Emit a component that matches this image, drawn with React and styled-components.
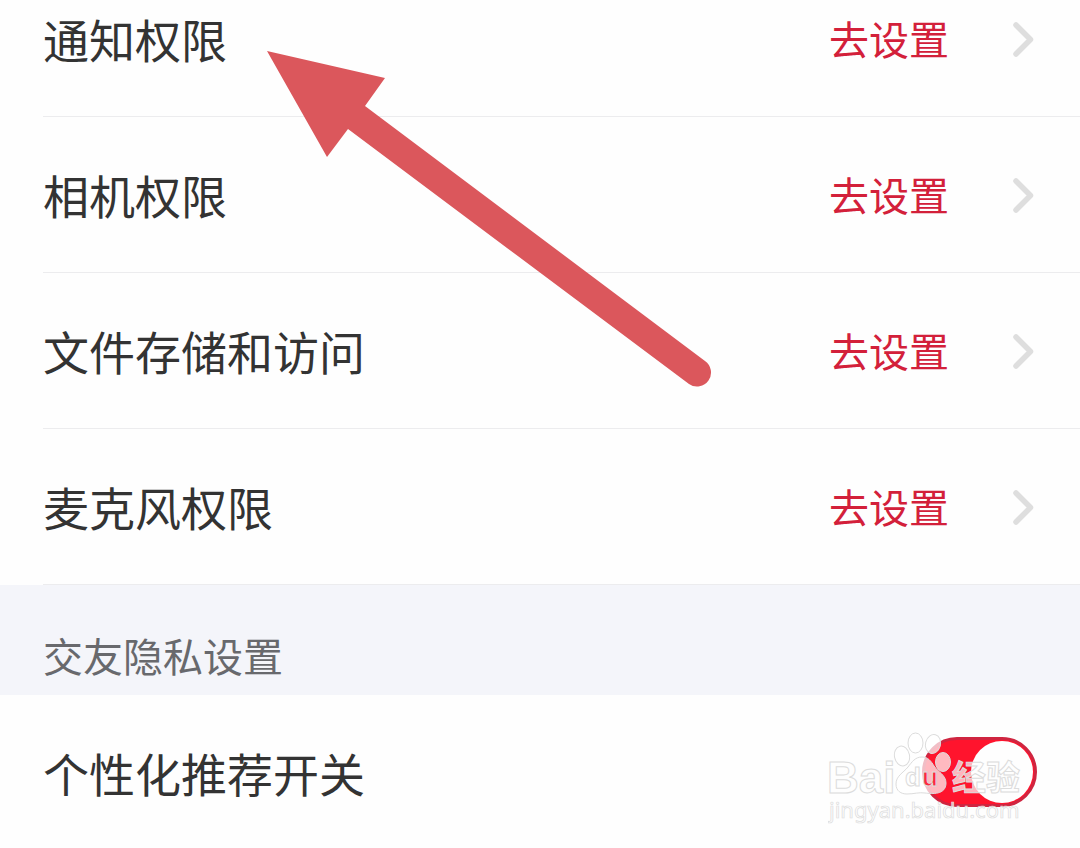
import React, { useState } from 'react'
import styled, { createGlobalStyle } from 'styled-components'

const GlobalStyle = createGlobalStyle`
  * {
    box-sizing: border-box;
  }
  body {
    margin: 0;
    background: #fefefe;
    color: #333;
    font-family: "Noto Sans CJK SC", "Noto Sans", sans-serif;
  }
`

const Page = styled.main`
  position: relative;
  overflow: hidden;
`

const List = styled.ul`
  list-style: none;
  margin: 0;
  padding: 0 0 0 43px;
`

const Row = styled.li`
  display: flex;
  align-items: center;
  justify-content: space-between;
  padding: 39px 44px 40px 0;
  border-bottom: 1px solid #ececee;
  &:first-child {
    padding-top: 0;
  }
`

const Label = styled.span`
  font-size: 46px;
  line-height: 76px;
`

const ActionButton = styled.button`
  display: flex;
  align-items: center;
  gap: 63px;
  border: none;
  padding: 0;
  background: none;
  color: #d3203a;
  font-family: inherit;
  font-size: 40px;
  line-height: 76px;
  cursor: pointer;
`

const SectionTitle = styled.h2`
  margin: 0;
  padding: 40px 43px 10px;
  background: #f4f5fa;
  color: #68696d;
  font-size: 40px;
  font-weight: 400;
  line-height: 60px;
`

const SwitchRow = styled.label`
  display: flex;
  align-items: center;
  justify-content: space-between;
  padding: 39px 43px 38px;
`

const Switch = styled.input`
  appearance: none;
  display: flex;
  justify-content: ${(props) => (props.checked ? 'flex-end' : 'flex-start')};
  width: 115px;
  height: 70px;
  margin: 0;
  padding: 1px;
  border: 3px solid ${(props) => (props.checked ? '#cf2540' : '#ccc')};
  border-radius: 35px;
  background: ${(props) => (props.checked ? '#ff142d' : '#ddd')};
  cursor: pointer;
  &::before {
    content: "";
    width: 62px;
    height: 62px;
    border-radius: 50%;
    background: #fefefe;
  }
`

const Arrow = styled.svg`
  position: absolute;
  top: 51px;
  left: 267px;
  pointer-events: none;
`

const Watermark = styled.svg`
  position: absolute;
  right: 50px;
  bottom: 20px;
  pointer-events: none;
  fill: #fff;
  fill-opacity: 0.7;
  stroke: #dcdcdc;
  stroke-width: 1;
`

const permissions = ['通知权限', '相机权限', '文件存储和访问', '麦克风权限']

function Chevron() {
  return (
    <svg width="24" height="40" viewBox="0 0 24 40" fill="none" aria-hidden="true">
      <path d="M4 7 18.5 21.5 4 36" stroke="#dedede" strokeWidth="5.5" strokeLinecap="round" strokeLinejoin="round" />
    </svg>
  )
}

function BaiduMark() {
  return (
    <Watermark width="202" height="96" viewBox="0 0 202 96">
      <text x="-1" y="61" fontFamily="Liberation Sans" fontWeight="700" fontSize="44">Bai</text>
      <ellipse cx="74" cy="24" rx="7.5" ry="10" transform="rotate(-12 74 24)" />
      <ellipse cx="87.5" cy="11" rx="7.5" ry="10" />
      <ellipse cx="105" cy="12" rx="7.5" ry="9.5" transform="rotate(15 105 12)" />
      <ellipse cx="115" cy="30" rx="7.5" ry="9.5" />
      <path
        fillRule="evenodd"
        d="M94 25c-7 0-10 5-14 10-5 6-12 9-12 17 0 7 5 10 11 10 7 0 12-2 18-1 7 1 21 2 21-10 0-8-8-11-12-17-3-5-6-9-12-9z"
      />
      <text x="77" y="54" fontFamily="Liberation Sans" fontWeight="700" fontSize="26" fill="#fff" fillOpacity="0.9">d</text>
      <text x="94" y="54" fontFamily="Liberation Sans" fontWeight="700" fontSize="26" fill="#ff142d" fillOpacity="0.9">u</text>
      <text x="124" y="58" fontFamily="Noto Sans CJK SC" fontWeight="700" fontSize="34">经验</text>
      <text x="1" y="86" fontFamily="Noto Sans" fontSize="22" strokeWidth="0.7">jingyan.baidu.com</text>
    </Watermark>
  )
}

export default function App() {
  const [recommend, setRecommend] = useState(true)

  return (
    <Page>
      <GlobalStyle />
      <List>
        {permissions.map((name) => (
          <Row key={name}>
            <Label>{name}</Label>
            <ActionButton type="button" aria-label={name + ' 去设置'}>
              去设置
              <Chevron />
            </ActionButton>
          </Row>
        ))}
      </List>

      <SectionTitle>交友隐私设置</SectionTitle>

      <SwitchRow>
        <Label>个性化推荐开关</Label>
        <Switch type="checkbox" checked={recommend} onChange={(e) => setRecommend(e.target.checked)} />
      </SwitchRow>

      <Arrow width="446" height="338" viewBox="0 0 446 338" aria-hidden="true">
        <path d="M0 0 118 27 98 55 438 310A14 14 0 0 1 422 333L81 78 60 106z" fill="#db575c" />
      </Arrow>
      <BaiduMark />
    </Page>
  )
}
